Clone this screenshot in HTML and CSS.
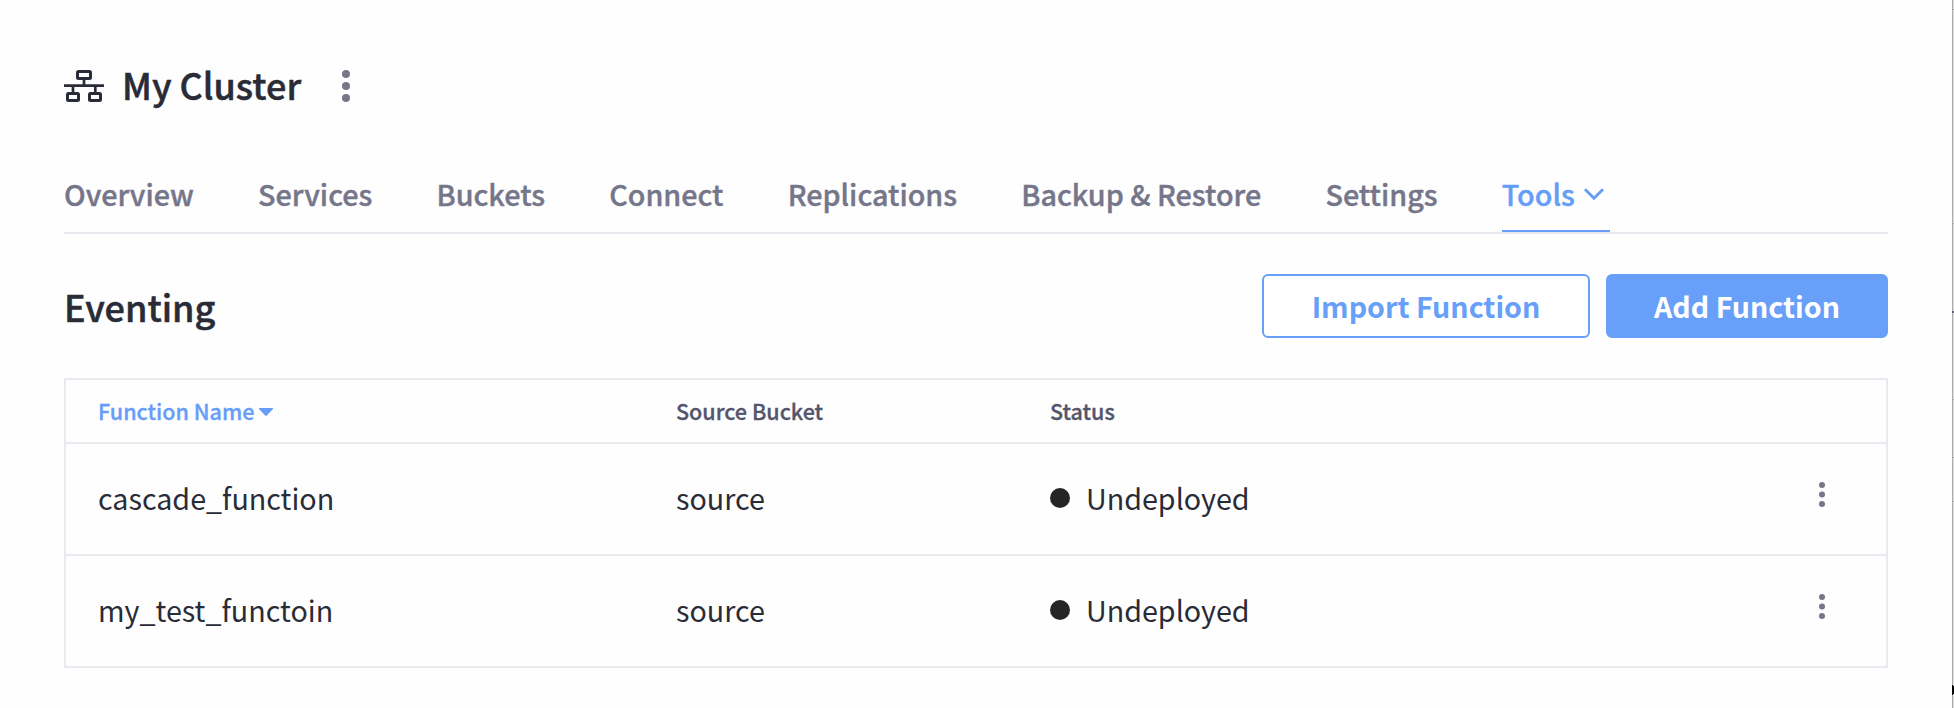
FILE: index.html
```
<!DOCTYPE html>
<html lang="en">
<head>
<meta charset="utf-8">
<title>My Cluster - Eventing</title>
<link rel="stylesheet" href="styles.css">
</head>
<body>
<div class="frame">
<main class="page">
  <header class="cluster">
    <svg class="cluster-icon" width="40" height="34" viewBox="0 0 40 34" fill="none" stroke="#292c36">
      <g stroke-width="3"><rect x="13.5" y="2.5" width="13" height="7" rx="1"/><rect x="3.5" y="24.5" width="11" height="7" rx="1"/><rect x="25.5" y="24.5" width="11" height="7" rx="1"/></g>
      <path stroke-width="2.7" d="M0 16.7H40M20 10v6M9 17v7M31.3 17v7"/>
    </svg>
    <h1 class="cluster-name">My Cluster</h1>
    <svg class="kebab" width="8" height="32" viewBox="0 0 8 32"><circle cx="4" cy="4" r="4"/><circle cx="4" cy="16" r="4"/><circle cx="4" cy="28" r="4"/></svg>
  </header>
  <nav class="tabs">
    <a class="tab">Overview</a>
    <a class="tab">Services</a>
    <a class="tab">Buckets</a>
    <a class="tab">Connect</a>
    <a class="tab">Replications</a>
    <a class="tab">Backup &amp; Restore</a>
    <a class="tab">Settings</a>
    <a class="tab tab-active">Tools<svg class="chevron" width="20" height="12" viewBox="0 0 20 12" fill="none" stroke="#669df8" stroke-width="2.9"><path d="M1 1.2L10 10.2L19 1.2"/></svg></a>
  </nav>
  <section class="toolbar">
    <h2 class="heading">Eventing</h2>
    <button class="button button-outline">Import Function</button>
    <button class="button button-solid">Add Function</button>
  </section>
  <section class="table">
    <div class="row head">
      <div class="sorted">Function Name<svg class="caret" width="14" height="8" viewBox="0 0 14 8"><path d="M0 0H14V1L7.8 7.6Q7 8.2 6.2 7.6L0 1Z"/></svg></div>
      <div>Source Bucket</div>
      <div>Status</div>
    </div>
    <div class="row">
      <div>cascade_function</div>
      <div>source</div>
      <div class="status"><i class="dot"></i>Undeployed</div>
      <svg class="kebab" width="6" height="25" viewBox="0 0 6 25"><circle cx="3" cy="3" r="3"/><circle cx="3" cy="12.5" r="3"/><circle cx="3" cy="22" r="3"/></svg>
    </div>
    <div class="row">
      <div>my_test_functoin</div>
      <div>source</div>
      <div class="status"><i class="dot"></i>Undeployed</div>
      <svg class="kebab" width="6" height="25" viewBox="0 0 6 25"><circle cx="3" cy="3" r="3"/><circle cx="3" cy="12.5" r="3"/><circle cx="3" cy="22" r="3"/></svg>
    </div>
  </section>
</main>
<svg class="edge" width="2" height="708" viewBox="0 0 2 708">
  <path fill="#dedede" d="M0 0h2v708H0z"/><path fill="#ababab" d="M0 0h1v708H0z"/>
  <path fill="#aaa" d="M0 9h2v1H0zM0 223h2v1H0zM0 399h2v1H0zM0 457h2v1H0zM0 501h2v1H0z"/>
  <path fill="#667" d="M0 311h2v2H0z"/><path fill="#000" d="M0 685h1v1h1v8H1v1H0z"/>
</svg>
</div>
</body>
</html>
```
FILE: styles.css
```
* { box-sizing: border-box; }
body { margin: 0; background: #fefefe; color: #292c36; font-family: "Noto Sans CJK SC", "Open Sans", sans-serif; }
.frame { display: flex; height: 708px; overflow: hidden; }
.page { flex: 1; padding: 58px 64px 0; }
.edge { flex: none; }
.cluster { display: flex; align-items: center; height: 56px; }
.cluster-name { margin: 0 0 0 18px; width: 220px; padding-bottom: 3px; font-size: 36px; line-height: 53px; font-weight: 500; white-space: nowrap; -webkit-text-stroke: 0.5px; }
.kebab { fill: #75768a; }
.tabs { display: flex; gap: 64.15px; height: 80px; margin-top: 40px; border-bottom: 2px solid #e9e9ef; }
.tab { display: flex; height: 78px; font-size: 28.75px; line-height: 80px; font-weight: 500; color: #75768a; white-space: nowrap; -webkit-text-stroke: 0.4px; }
.tab-active { width: 108px; color: #669df8; border-bottom: 2px solid #669df8; }
.chevron { margin: 34px 0 0 9px; }
.toolbar { display: flex; gap: 16px; height: 64px; margin-top: 40px; }
.heading { flex: 1; margin: 0; font-size: 36px; line-height: 65px; font-weight: 500; -webkit-text-stroke: 0.5px; }
.button { height: 64px; padding: 0; border: 2px solid #679ff9; border-radius: 6px; font: 700 28.6px/60px "Noto Sans CJK SC", "Open Sans", sans-serif; white-space: nowrap; }
.button-outline { width: 328px; background: #fff; color: #679ff9; }
.button-solid { width: 282px; background: #679ff9; color: #fff; }
.table { margin-top: 40px; border: 2px solid #e9e9ef; }
.row { display: grid; grid-template-columns: 578px 374px 769px 1fr; align-items: center; height: 112px; padding: 0 0 2px 32px; border-bottom: 2px solid #e9e9ef; font-size: 28.7px; line-height: 40px; }
.row:last-child { height: 110px; border-bottom: 0; }
.row .kebab { margin-bottom: 8px; }
.head { height: 64px; padding-bottom: 0; font-size: 21.55px; font-weight: 500; color: #53556b; line-height: 32px; -webkit-text-stroke: 0.3px; }
.sorted { display: flex; align-items: center; color: #669df8; }
.caret { margin: 2px 0 0 4px; fill: #669df8; }
.status { display: flex; align-items: center; }
.dot { width: 20px; height: 20px; margin-right: 16px; border-radius: 50%; background: #252525; }
```
